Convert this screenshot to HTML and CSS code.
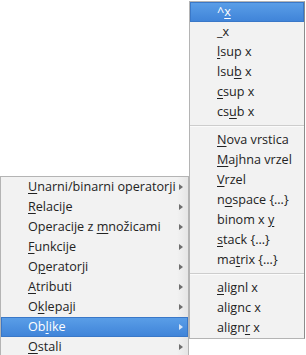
FILE: index.html
```html
<!DOCTYPE html>
<html>
<head>
<meta charset="utf-8">
<link rel="stylesheet" href="styles.css">
</head>
<body>
<div class="stage">
  <ul class="menu main">
    <li class="item"><span class="label"><u>U</u>narni/binarni operatorji</span><span class="arrow"></span></li>
    <li class="item"><span class="label"><u>R</u>elacije</span><span class="arrow"></span></li>
    <li class="item"><span class="label">Operacije z <u>m</u>nožicami</span><span class="arrow"></span></li>
    <li class="item"><span class="label"><u>F</u>unkcije</span><span class="arrow"></span></li>
    <li class="item"><span class="label">O<u>p</u>eratorji</span><span class="arrow"></span></li>
    <li class="item"><span class="label"><u>A</u>tributi</span><span class="arrow"></span></li>
    <li class="item"><span class="label">O<u>k</u>lepaji</span><span class="arrow"></span></li>
    <li class="item active"><span class="label">Ob<u>l</u>ike</span><span class="arrow"></span></li>
    <li class="item"><span class="label"><u>O</u>stali</span><span class="arrow"></span></li>
  </ul>
  <ul class="menu sub">
    <li class="item active"><span class="label">^<u>x</u></span></li>
    <li class="item"><span class="label">_x</span></li>
    <li class="item"><span class="label"><u>l</u>sup x</span></li>
    <li class="item"><span class="label">lsu<u>b</u> x</span></li>
    <li class="item"><span class="label"><u>c</u>sup x</span></li>
    <li class="item"><span class="label">cs<u>u</u>b x</span></li>
    <li class="sep"></li>
    <li class="item"><span class="label"><u>N</u>ova vrstica</span></li>
    <li class="item"><span class="label"><u>M</u>ajhna vrzel</span></li>
    <li class="item"><span class="label"><u>V</u>rzel</span></li>
    <li class="item"><span class="label">n<u>o</u>space {…}</span></li>
    <li class="item"><span class="label">binom x <u>y</u></span></li>
    <li class="item"><span class="label"><u>s</u>tack {…}</span></li>
    <li class="item"><span class="label">ma<u>t</u>rix {…}</span></li>
    <li class="sep"></li>
    <li class="item"><span class="label"><u>a</u>lignl x</span></li>
    <li class="item"><span class="label">alignc x</span></li>
    <li class="item"><span class="label">align<u>r</u> x</span></li>
  </ul>
</div>
</body>
</html>
```
FILE: styles.css
```css
html, body {
  margin: 0;
  padding: 0;
  background: #ffffff;
  overflow: hidden;
}
.stage {
  display: flex;
  align-items: flex-start;
  width: 306px;
  height: 355px;
  overflow: hidden;
  font-family: "Open Sans", "Noto Sans", sans-serif;
  font-size: 12.6px;
  color: #232323;
}
.menu {
  list-style: none;
  margin: 0;
  padding: 0;
  background: #f2f2f2;
  border: 1px solid #b4b4b4;
  box-sizing: border-box;
}
.main {
  width: 189px;
  margin-top: 176px;
  background: linear-gradient(to right, #f2f2f2 0, #f2f2f2 176px, #e4e4e4 188px);
}
.sub {
  width: 116px;
  margin-top: 1px;
  border-right-color: #8c8c8c;
}
.item {
  height: 20px;
  display: flex;
  align-items: center;
  padding-left: 27px;
  position: relative;
  white-space: nowrap;
}
.item u {
  text-decoration: underline;
  text-underline-offset: 2px;
}
.item.active {
  background: linear-gradient(to bottom, #5b9fe8, #3f83d8);
  color: #ffffff;
  box-shadow: inset 0 0 0 1px #3a78c8;
}
.label {
  flex: 1;
  line-height: 20px;
}
.arrow {
  width: 0;
  height: 0;
  border-top: 3px solid transparent;
  border-bottom: 3px solid transparent;
  border-left: 4px solid #6e6e6e;
  margin-right: 5px;
}
.item.active .arrow {
  border-left-color: #d6e6f8;
}
.sep {
  height: 8px;
  display: flex;
  flex-direction: column;
  justify-content: center;
}
.sep::before {
  content: "";
  height: 1px;
  background: #cdcdcd;
}
.sep::after {
  content: "";
  height: 1px;
  background: #fbfbfb;
}
```
